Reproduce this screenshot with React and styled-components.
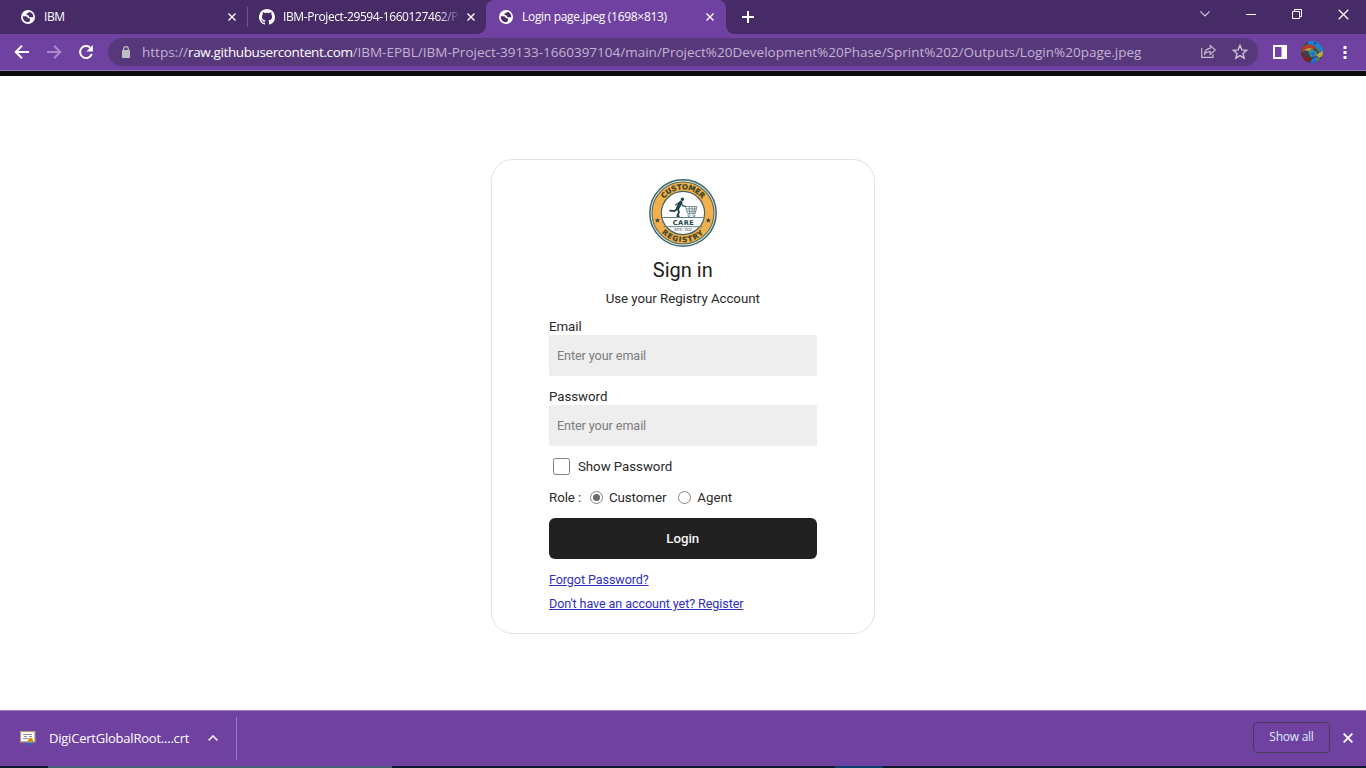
import React from "react";
import styled, { createGlobalStyle, css } from "styled-components";

const Global = createGlobalStyle`
  * { box-sizing: border-box; }
  html, body { margin: 0; padding: 0; }
  body { width: 1366px; height: 768px; overflow: hidden; background: #fff; }
  svg { display: block; flex: none; }
`;

const ui = css`
  font-family: "Open Sans", "Noto Sans", sans-serif;
  white-space: nowrap;
`;

const Browser = styled.div`
  width: 1366px;
  height: 768px;
  display: flex;
  flex-direction: column;
  overflow: hidden;
`;

const TabStrip = styled.div`
  height: 34px;
  flex: none;
  display: flex;
  background: #472b66;
`;

const Tab = styled.div`
  ${ui}
  width: ${(p) => p.$width}px;
  height: 34px;
  flex: none;
  display: flex;
  align-items: center;
  padding: 0 ${(p) => p.$end || 12}px 0 ${(p) => p.$pad}px;
  color: #fff;
  position: relative;
  background: ${(p) => (p.$active ? "#6f42a2" : "transparent")};
  border-radius: ${(p) => (p.$active ? "8px 8px 0 0" : "0")};
  ${(p) =>
    p.$active &&
    css`
      &::before,
      &::after {
        content: "";
        position: absolute;
        bottom: 0;
        width: 8px;
        height: 8px;
      }
      &::before {
        left: -8px;
        background: radial-gradient(circle at 0 0, transparent 7.5px, #6f42a2 8px);
      }
      &::after {
        right: -8px;
        background: radial-gradient(circle at 100% 0, transparent 7.5px, #6f42a2 8px);
      }
    `}
`;

const TabTitle = styled.span`
  flex: 1;
  min-width: 0;
  margin: 0 5px 0 ${(p) => (p.$fade ? 8 : 9)}px;
  font-size: 12px;
  line-height: 18px;
  letter-spacing: ${(p) => p.$spacing || 0}px;
  ${(p) => p.$fade && css`mask-image: linear-gradient(90deg, #000 calc(100% - 24px), transparent calc(100% - 1px));`}
`;

const TabDivider = styled.div`
  width: 1px;
  height: 20px;
  margin: 7px 0 0;
  flex: none;
  background: #74529a;
`;

const NewTab = styled.div`
  width: 44px;
  display: flex;
  align-items: center;
  justify-content: center;
`;

const WindowControls = styled.div`
  margin-left: auto;
  display: flex;
  height: 28px;
`;

const Control = styled.div`
  width: 46px;
  display: flex;
  align-items: center;
  justify-content: center;
`;

const Toolbar = styled.div`
  height: 37px;
  flex: none;
  display: flex;
  align-items: center;
  padding: 0 13px 0 13px;
  background: #6f42a2;
  border-bottom: 1px solid #9673bd;
`;

const NavIcons = styled.div`
  display: flex;
  gap: 14px;
  width: 95px;
`;

const AddressBar = styled.div`
  ${ui}
  width: 1150px;
  height: 28px;
  flex: none;
  border-radius: 14px;
  background: #57387b;
  display: flex;
  align-items: center;
  padding: 0 9px 0 13px;
`;

const Url = styled.div`
  flex: 1;
  margin-left: 11px;
  font-size: 13.5px;
  line-height: 20px;
  color: #c3b3d4;
`;

const Host = styled.span`
  color: #fff;
  letter-spacing: -0.39px;
`;

const AddressActions = styled.div`
  display: flex;
  gap: 14px;
`;

const ToolbarActions = styled.div`
  display: flex;
  align-items: center;
  flex: 1;
  padding-left: 15px;
  gap: 14px;
`;

const MenuButton = styled.div`
  margin-left: 5.5px;
`;

const PageGap = styled.div`
  height: 5px;
  flex: none;
  background: #0d0c0e;
`;

const Page = styled.main`
  flex: 1;
  display: flex;
  justify-content: center;
  padding-top: 83px;
  background: #fff;
`;

const Card = styled.form`
  width: 384px;
  height: 475px;
  border: 1px solid #e2e2e2;
  border-radius: 22px;
  padding: 19px 57.5px 0 57px;
  font-family: Roboto, sans-serif;
  font-size: 13.3px;
  letter-spacing: -0.05px;
  color: #2a2a2a;
  display: flex;
  flex-direction: column;
`;

const LogoWrap = styled.div`
  display: flex;
  justify-content: center;
  height: 69px;
`;

const Title = styled.h1`
  margin: 7px 0 0;
  font-size: 20px;
  font-weight: 400;
  line-height: 30px;
  letter-spacing: 0;
  text-align: center;
  color: #1c1c1c;
`;

const Subtitle = styled.p`
  margin: 5px 0 0;
  line-height: 18px;
  text-align: center;
`;

const Label = styled.label`
  line-height: 16px;
  margin-top: ${(p) => p.$top}px;
`;

const Field = styled.div`
  height: 41px;
  flex: none;
  border-radius: 2px;
  background: #eeeeee;
  color: #7c7c7c;
  font-size: 12.6px;
  letter-spacing: -0.08px;
  line-height: 41px;
  padding-left: 8px;
`;

const CheckRow = styled.div`
  display: flex;
  align-items: center;
  height: 18px;
  margin: 11px 0 0 4px;
`;

const CheckBox = styled.span`
  width: 17px;
  height: 17px;
  margin-right: 8px;
  border: 1px solid #808080;
  border-radius: 2.5px;
`;

const RoleRow = styled.div`
  display: flex;
  align-items: center;
  height: 18px;
  margin-top: 13px;
`;

const Radio = styled.span`
  width: 13px;
  height: 13px;
  margin: 1px 6px 0 ${(p) => p.$left}px;
  border: 1px solid #858585;
  border-radius: 50%;
  display: flex;
  align-items: center;
  justify-content: center;
  &::after {
    content: "";
    width: 7px;
    height: 7px;
    border-radius: 50%;
    background: ${(p) => (p.$on ? "#6b6b6b" : "transparent")};
  }
`;

const LoginButton = styled.div`
  height: 41px;
  flex: none;
  margin-top: 12px;
  border-radius: 6px;
  background: #212121;
  color: #f4f4f4;
  line-height: 41px;
  text-align: center;
  font-weight: 500;
  font-size: 13.3px;
  letter-spacing: 0;
`;

const Link = styled.a`
  align-self: flex-start;
  margin-top: ${(p) => p.$top}px;
  line-height: 16px;
  font-size: 12.6px;
  letter-spacing: -0.1px;
  color: #3030bd;
  text-decoration: underline;
  white-space: nowrap;
`;

const Downloads = styled.footer`
  ${ui}
  height: 56px;
  flex: none;
  display: flex;
  align-items: center;
  padding: 0 13px 1px 20px;
  background: #6f42a2;
  border-top: 1px solid #9a78bf;
  color: #fff;
`;

const FileName = styled.span`
  width: 141px;
  margin: 0 18px 0 13px;
  font-size: 13px;
  letter-spacing: -0.22px;
`;

const ShelfDivider = styled.div`
  width: 1px;
  height: 43px;
  margin-left: 18px;
  background: #9a78bf;
`;

const ShowAll = styled.div`
  width: 77px;
  height: 31px;
  margin: 0 13px 1px auto;
  border: 1px solid #463c59;
  border-radius: 4px;
  color: #dcebfb;
  font-size: 12px;
  line-height: 28px;
  text-align: center;
  letter-spacing: -0.25px;
`;

const Taskbar = styled.div`
  height: 2px;
  flex: none;
  display: flex;
  background: #0c1b2c;
`;

const TaskItem = styled.div`
  width: ${(p) => p.$width}px;
  margin-left: ${(p) => p.$left}px;
  background: ${(p) => p.$color};
`;

const Globe = () => (
  <svg width="14" height="14" viewBox="0 0 14 14">
    <circle cx="7" cy="7" r="7" fill="#fff" />
    <path
      d="M1.700 6.300h3.100c1.200 0 2 .8 2 1.900h1.500c.5 0 .7.300.7.800v.9c0 1-.9 1.900-2 2.300A5.400 5.400 0 0 1 1.700 6.300zM7.900 1.700c-.2 1.100-.7 1.500-1.700 1.500-.6 0-.8.4-.8.9 0 .8.5 1.100 1.300 1.100.8 0 1 .5 1.300 1.200.3.700.8.900 1.500.9h2.800A5.400 5.400 0 0 0 7.900 1.700z"
      fill="#4b2d6c"
    />
  </svg>
);

const GitHub = () => (
  <svg width="16" height="16" viewBox="0 0 16 16" fill="#fff">
    <path d="M8 0C3.580 0 0 3.580 0 8c0 3.540 2.290 6.530 5.470 7.590.4.070.55-.17.55-.38 0-.19-.01-.82-.01-1.490-2.010.37-2.530-.49-2.690-.94-.09-.23-.48-.94-.82-1.130-.28-.15-.68-.52-.01-.53.63-.01 1.080.58 1.230.82.720 1.210 1.870.87 2.330.66.070-.52.28-.87.51-1.070-1.780-.2-3.640-.89-3.640-3.950 0-.87.31-1.590.82-2.150-.08-.2-.36-1.020.08-2.120 0 0 .67-.21 2.200.82.640-.18 1.320-.27 2-.27s1.360.09 2 .27c1.530-1.040 2.200-.82 2.200-.82.440 1.100.16 1.920.08 2.120.510.56.820 1.270.820 2.150 0 3.070-1.870 3.750-3.650 3.950.290.25.540.73.540 1.480 0 1.070-.01 1.930-.01 2.200 0 .21.150.46.550.38A8.010 8.010 0 0 0 16 8c0-4.420-3.580-8-8-8z" />
  </svg>
);

const Cross = ({ size = 8, stroke = 1.4, color = "#fff" }) => (
  <svg width={size} height={size} viewBox="0 0 8 8" stroke={color} strokeWidth={stroke} fill="none">
    <path d="M.5.5l7 7M7.500.5l-7 7" />
  </svg>
);

const Arrow = ({ flip, color }) => (
  <svg width="18" height="18" viewBox="0 0 18 18" fill="none" stroke={color} strokeWidth="2">
    <path d={flip ? "M2 9h13M9 2.700l6.300 6.300L9 15.300" : "M16 9H3M9 2.700L2.700 9 9 15.300"} />
  </svg>
);

const Reload = () => (
  <svg width="18" height="18" viewBox="0 0 18 18">
    <path d="M14.800 11A6 6 0 1 1 13.300 4.700" fill="none" stroke="#fff" strokeWidth="2" />
    <path d="M15.900 1.900v6.500H9.400z" fill="#fff" />
  </svg>
);

const Lock = () => (
  <svg width="10" height="12" viewBox="0 0 10 12">
    <rect x="1" y="4" width="8" height="8" rx=".8" fill="#bdc1c6" />
    <path d="M2.700 4.500V3a2.300 2.300 0 0 1 4.600 0v1.500" fill="none" stroke="#bdc1c6" strokeWidth="1.200" />
  </svg>
);

const Share = () => (
  <svg width="17" height="16" viewBox="0 0 17 16" fill="none" stroke="#c3b9cc" strokeWidth="1.200">
    <path d="M1.700 5v9.300h11.300v-3" />
    <path d="M4.500 11.200c.3-3.800 2.300-5.700 5.700-5.900V2.500L15.300 7l-5.100 4.400V8.700c-2.500 0-4.400.7-5.700 2.500z" />
  </svg>
);

const Star = () => (
  <svg width="18" height="18" viewBox="0 0 18 18" fill="none" stroke="#c9bfd1" strokeWidth="1.500">
    <path d="M9 2.500l1.900 4.400 4.700.4-3.600 3.100 1.100 4.700L9 12.600l-4.100 2.500L6 10.400 2.400 7.300l4.700-.4z" />
  </svg>
);

const SidePanel = () => (
  <svg width="14" height="14" viewBox="0 0 14 14">
    <path d="M0 0h14v14H0zM2 2v10h6.500V2z" fill="#fff" fillRule="evenodd" />
  </svg>
);

const Avatar = () => (
  <svg width="22" height="22" viewBox="0 0 22 22">
    <clipPath id="avatar-clip"><circle cx="11" cy="11" r="11" /></clipPath>
    <g clipPath="url(#avatar-clip)">
      <path d="M0 0h22v22H0z" fill="#284a60" />
      <path d="M6 0h16v11l-5-1-4-5-5-1z" fill="#1684dc" />
      <path d="M1 6l5-3 6 1 4 3-4 1-6 0-4 3-2-1z" fill="#a8402c" />
      <path d="M0 12l4 0 3 4 6 2-2 3H4z" fill="#7b2417" />
      <path d="M3 9l5-2 4 1-5 2zM15 14l4-3 3-1v5l-4 2z" fill="#b7a640" />
      <path d="M7 10l4-2 5 3-1 4-5 1z" fill="#5c8a77" />
      <path d="M9 12l4-2 1 3-2 3zM11 18l5-3 1 4-3 3h-5z" fill="#1673dc" />
      <path d="M15 6l3 2 1 3-3-2zM15 18l3-2 1 3-3 2z" fill="#6d7a33" />
      <path d="M12 1l4 1-2 2zM3 13l3 2-2 1z" fill="#244b70" />
    </g>
  </svg>
);

const Menu = () => (
  <svg width="4" height="14" viewBox="0 0 4 14" fill="#fff">
    <rect x=".5" y="1" width="3" height="3" rx=".6" />
    <rect x=".5" y="6" width="3" height="3" rx=".6" />
    <rect x=".5" y="11" width="3" height="3" rx=".6" />
  </svg>
);

const Certificate = () => (
  <svg width="16" height="15" viewBox="0 0 16 15">
    <rect x=".6" y=".6" width="14.300" height="10.300" fill="#fff" stroke="#b5a278" strokeWidth="1.200" />
    <path d="M3 3.500h9M4 5.500h3M3 7.500h5M9 5.500h3" stroke="#8b8da6" />
    <path d="M8.500 10.500l-.5 3.500h2l.6-2 1 2h1.500l-.6-4z" fill="#1877e8" />
    <circle cx="10.500" cy="9.300" r="2.500" fill="#d99a16" />
    <circle cx="10.500" cy="9.300" r="1" fill="#b37408" />
  </svg>
);

const SealStar = ({ x, y }) => (
  <path
    transform={`translate(${x} ${y})`}
    d="M0-2.600L.7-.8 2.600-.8 1.100.4 1.700 2.300 0 1.200-1.700 2.300-1.100.4-2.600-.8-.7-.8z"
    fill="#26444a"
  />
);

const Seal = () => (
  <svg width="68" height="68" viewBox="0 0 68 68">
    <defs>
      <path id="seal-top" d="M10.400 34a23.600 23.600 0 0 1 47.200 0" />
      <path id="seal-bottom" d="M4.900 34a29.100 29.100 0 0 0 58.200 0" />
    </defs>
    <circle cx="34" cy="34" r="33.200" fill="#e8ecdf" stroke="#3f6871" strokeWidth="1.500" />
    <circle cx="34" cy="34" r="31" fill="#f3b04a" stroke="#4e6d68" strokeWidth="1.100" />
    <circle cx="34" cy="34" r="21.600" fill="#fff" stroke="#46656a" strokeWidth="1.200" />
    <g
      fill="#3f4529"
      stroke="#3f4529"
      strokeWidth=".25"
      fontFamily="'DejaVu Sans', sans-serif"
      fontWeight="700"
      fontSize="7.200"
      textAnchor="middle"
    >
      <text letterSpacing="-.2"><textPath href="#seal-top" startOffset="50%">CUSTOMER</textPath></text>
      <text letterSpacing="1.100"><textPath href="#seal-bottom" startOffset="50%">REGISTRY</textPath></text>
    </g>
    <SealStar x="8.500" y="41.400" />
    <SealStar x="59.300" y="41.400" />
    <path d="M13.300 38.500h41.400M14.500 47.700h39" stroke="#54757a" strokeWidth=".9" />
    <text x="34.300" y="45.600" textAnchor="middle" fontFamily="'DejaVu Sans', sans-serif" fontWeight="700" fontSize="6.700" textLength="21" fill="#1d4149">CARE</text>
    <text x="34" y="52.300" textAnchor="middle" fontFamily="Roboto, sans-serif" fontWeight="700" fontSize="2.600" textLength="17" fill="#5b7478">ESTD - 2022</text>
    <g fill="none" stroke="#1d4149" strokeLinecap="round" strokeLinejoin="round">
      <circle cx="33.400" cy="20.300" r="1.100" fill="#1d4149" strokeWidth="1.200" />
      <path d="M31.800 23.500l-3 5.500" strokeWidth="3.600" />
      <path d="M28 30l-2.700 2.200-4.300-.6" strokeWidth="1.800" />
      <path d="M29 30.200l1 3-1.700 4h1.500" strokeWidth="1.800" />
      <path d="M32.300 24.500l1.400 2.300 3 .5M30 23.800l-3.400 2.200" strokeWidth="1.200" />
    </g>
    <g fill="none" stroke="#5d7d80" strokeWidth=".8">
      <path d="M36.500 27.500h11.500l-1.800 7H38.500zM37 29.800h10.500M38 32.200h9M40 27.500l.7 7M43 27.500v7M45.800 27.500l-.8 7" />
      <circle cx="40" cy="36.800" r="1.100" />
      <circle cx="45" cy="36.800" r="1.100" />
    </g>
  </svg>
);

export default function App() {
  return (
    <Browser>
      <Global />
      <TabStrip>
        <Tab $width={247} $pad={21} $end={11}>
          <Globe />
          <TabTitle $spacing={-0.4}>IBM</TabTitle>
          <Cross />
        </Tab>
        <TabDivider />
        <Tab $width={238} $pad={11} $end={11}>
          <GitHub />
          <TabTitle $fade $spacing={-0.4}>IBM-Project-29594-1660127462/P</TabTitle>
          <Cross />
        </Tab>
        <Tab $active $width={240} $pad={13}>
          <Globe />
          <TabTitle $spacing={-0.3}>Login page.jpeg (1698×813)</TabTitle>
          <Cross />
        </Tab>
        <NewTab>
          <svg width="12" height="12" viewBox="0 0 12 12" stroke="#fff" strokeWidth="2"><path d="M6 0v12M0 6h12" /></svg>
        </NewTab>
        <WindowControls>
          <Control>
            <svg width="10" height="6" viewBox="0 0 10 6" fill="none" stroke="#d5cddd" strokeWidth="1.100"><path d="M.4.4L5 5 9.600.4" /></svg>
          </Control>
          <Control>
            <svg width="10" height="1" viewBox="0 0 10 1"><path d="M0 0h10v1H0z" fill="#fff" /></svg>
          </Control>
          <Control>
            <svg width="10" height="10" viewBox="0 0 10 10" fill="none" stroke="#fff"><path d="M.5 2.500h7v7h-7zM2.500 2.500v-2h7v7h-2" /></svg>
          </Control>
          <Control><Cross size={11} stroke={0.9} /></Control>
        </WindowControls>
      </TabStrip>
      <Toolbar>
        <NavIcons>
          <Arrow color="#fff" />
          <Arrow flip color="#a98bc9" />
          <Reload />
        </NavIcons>
        <AddressBar>
          <Lock />
          <Url>
            https://<Host>raw.githubusercontent.com</Host>
            /IBM-EPBL/IBM-Project-39133-1660397104/main/Project%20Development%20Phase/Sprint%202/Outputs/Login%20page.jpeg
          </Url>
          <AddressActions>
            <Share />
            <Star />
          </AddressActions>
        </AddressBar>
        <ToolbarActions>
          <SidePanel />
          <Avatar />
          <MenuButton><Menu /></MenuButton>
        </ToolbarActions>
      </Toolbar>
      <PageGap />
      <Page>
        <Card>
          <LogoWrap><Seal /></LogoWrap>
          <Title>Sign in</Title>
          <Subtitle>Use your Registry Account</Subtitle>
          <Label $top={11}>Email</Label>
          <Field>Enter your email</Field>
          <Label $top={13}>Password</Label>
          <Field>Enter your email</Field>
          <CheckRow><CheckBox />Show Password</CheckRow>
          <RoleRow>
            Role :
            <Radio $on $left={8.6} />Customer
            <Radio $left={12} />Agent
          </RoleRow>
          <LoginButton>Login</LoginButton>
          <Link $top={13}>Forgot Password?</Link>
          <Link $top={8}>Don't have an account yet? Register</Link>
        </Card>
      </Page>
      <Downloads>
        <Certificate />
        <FileName>DigiCertGlobalRoot....crt</FileName>
        <svg width="10" height="6" viewBox="0 0 10 6" fill="none" stroke="#eee6f5" strokeWidth="1.700"><path d="M.6 5.300L5 1l4.400 4.300" /></svg>
        <ShelfDivider />
        <ShowAll>Show all</ShowAll>
        <Cross size={10} stroke={1.5} />
      </Downloads>
      <Taskbar>
        <TaskItem $left={48} $width={344} $color="#42606f" />
        <TaskItem $left={443} $width={48} $color="#0b3d70" />
      </Taskbar>
    </Browser>
  );
}
